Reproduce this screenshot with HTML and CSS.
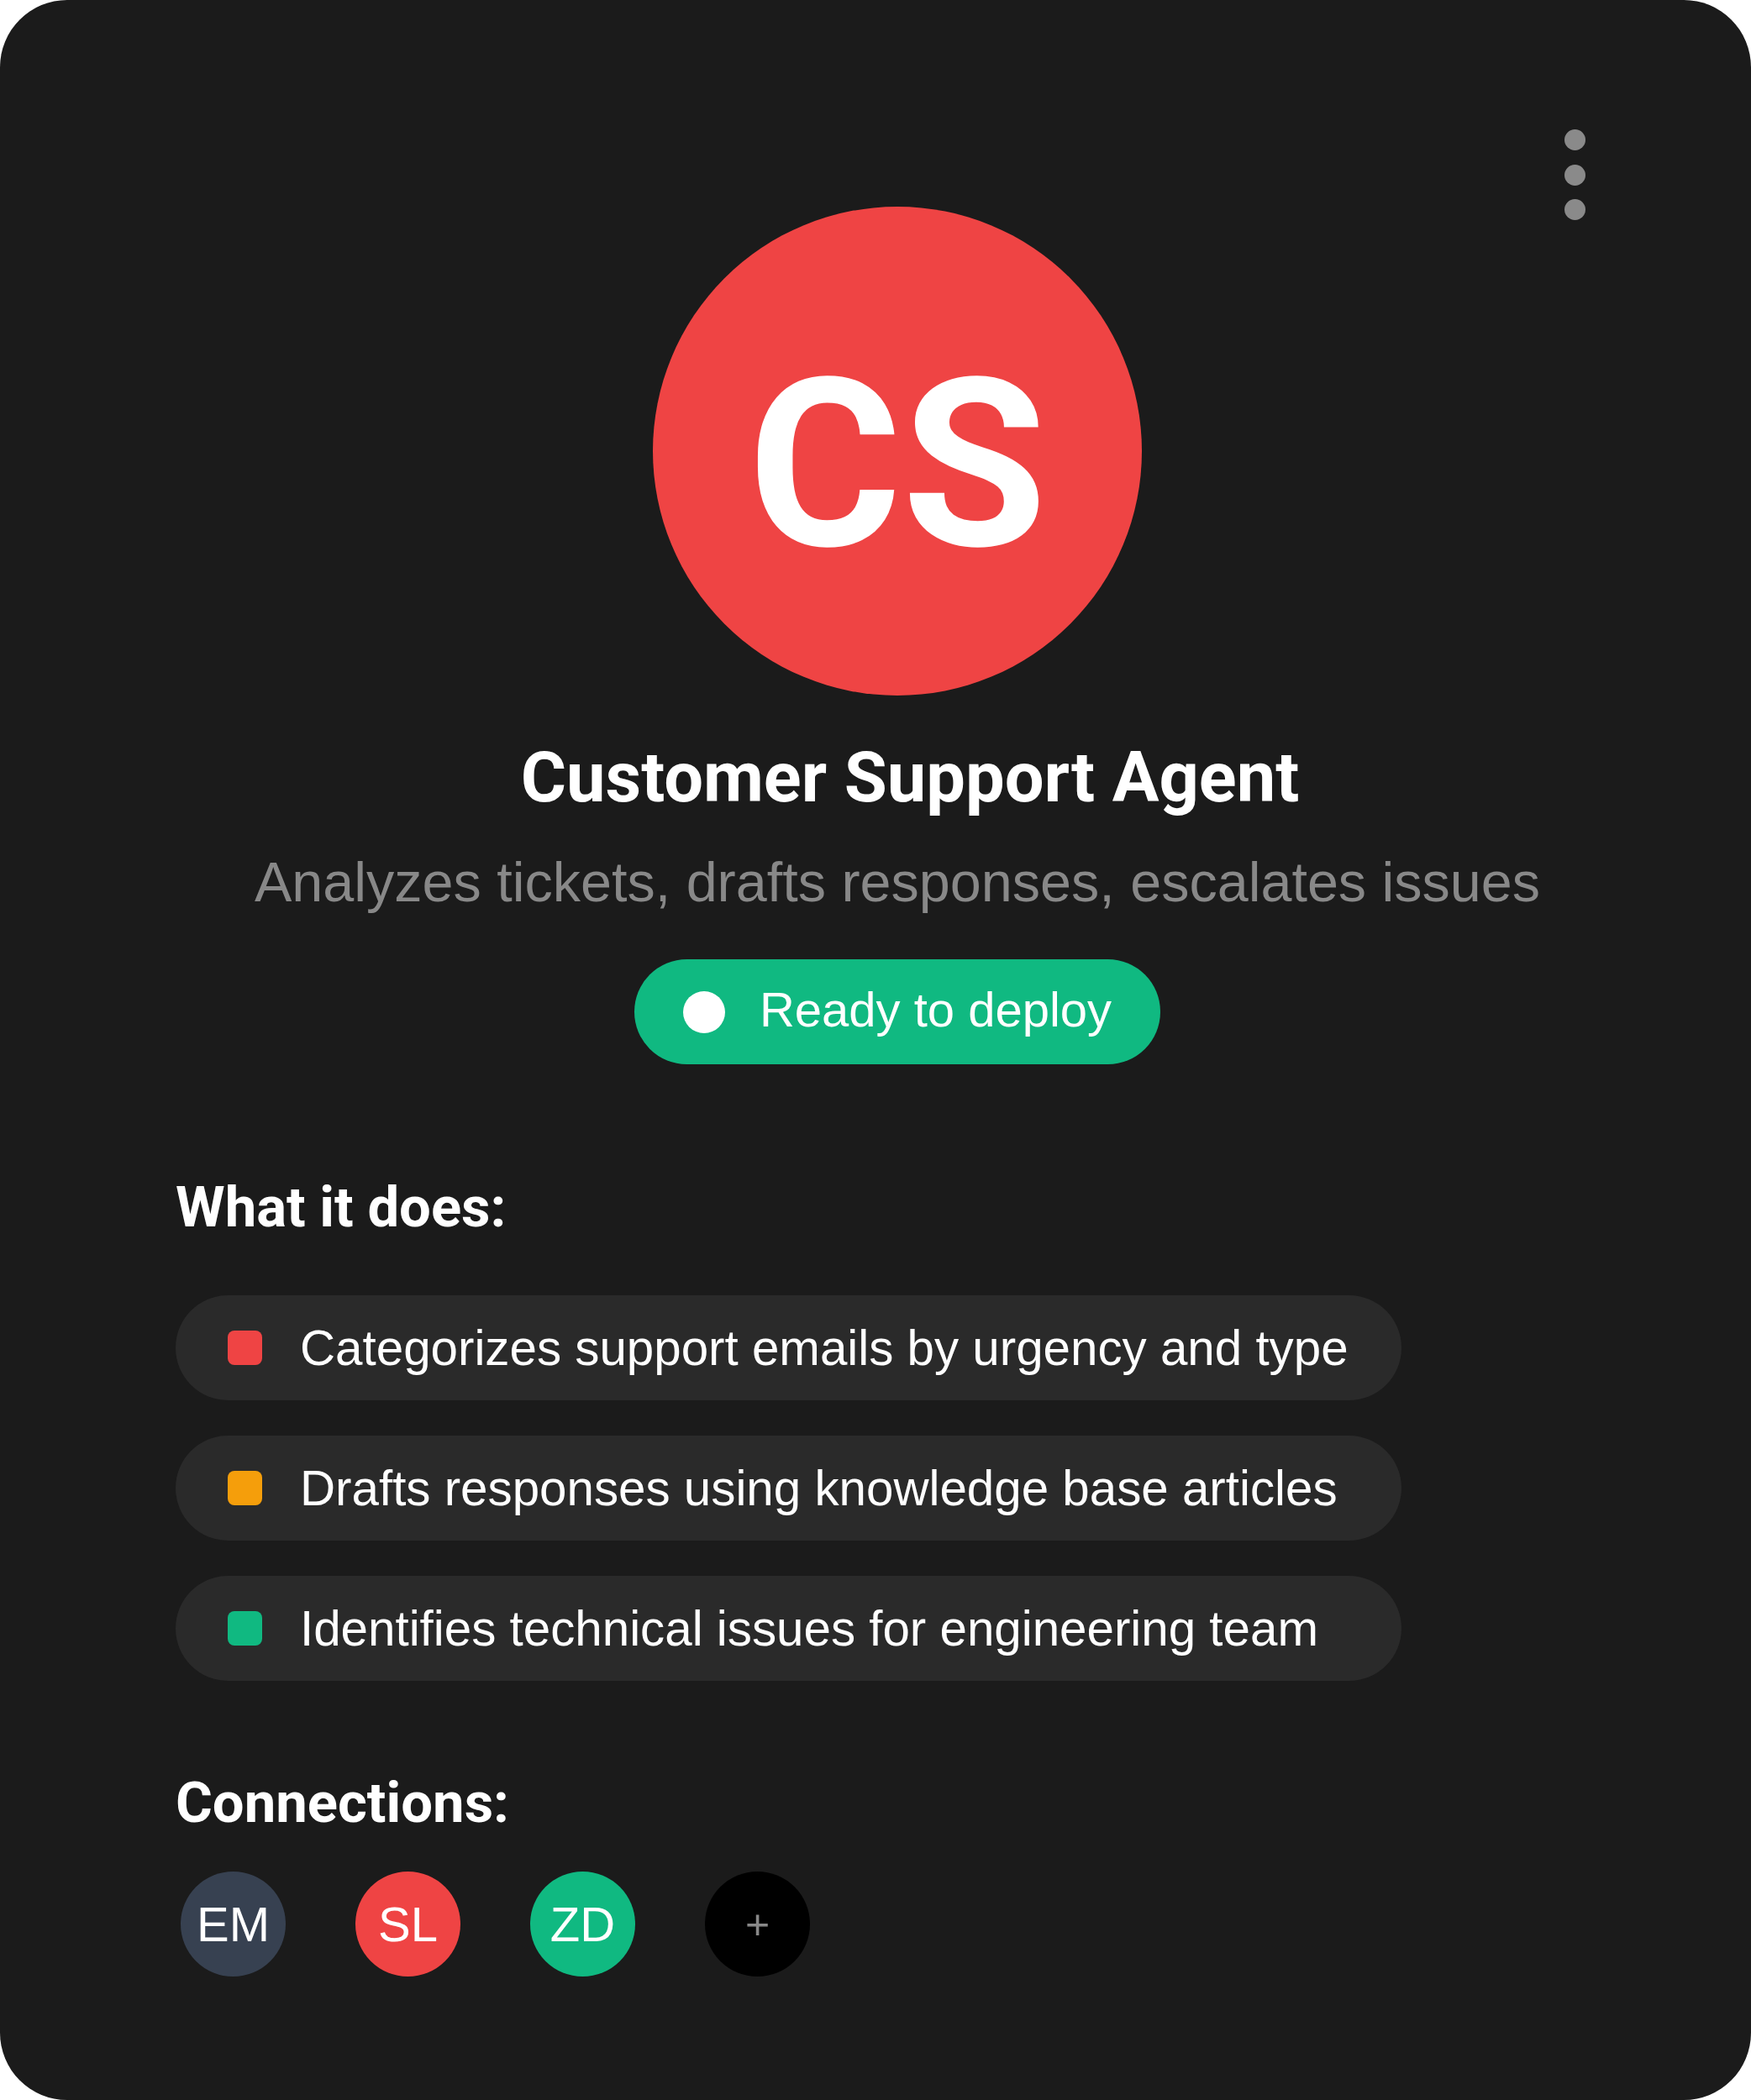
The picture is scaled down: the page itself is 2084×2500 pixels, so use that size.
FILE: index.html
```html
<!DOCTYPE html>
<html lang="en">
<head>
<meta charset="utf-8">
<title>Customer Support Agent</title>
<link rel="stylesheet" href="styles.css">
</head>
<body>
<div class="card">
  <button class="kebab" aria-label="More options">
    <span class="kebab-dot"></span>
    <span class="kebab-dot"></span>
    <span class="kebab-dot"></span>
  </button>
  <div class="content">
    <header class="hero">
      <div class="avatar">CS</div>
      <h1 class="title">Customer Support Agent</h1>
      <p class="subtitle">Analyzes tickets, drafts responses, escalates issues</p>
      <div class="status">
        <span class="status-dot"></span>
        <span class="status-text">Ready to deploy</span>
      </div>
    </header>

    <section class="section">
      <h2 class="section-title">What it does:</h2>
      <ul class="features">
        <li class="feature"><span class="marker marker-red"></span><span class="feature-text">Categorizes support emails by urgency and type</span></li>
        <li class="feature"><span class="marker marker-amber"></span><span class="feature-text">Drafts responses using knowledge base articles</span></li>
        <li class="feature"><span class="marker marker-green"></span><span class="feature-text">Identifies technical issues for engineering team</span></li>
      </ul>
    </section>

    <section class="section connections-section">
      <h2 class="section-title">Connections:</h2>
      <div class="connections">
        <span class="conn conn-em">EM</span>
        <span class="conn conn-sl">SL</span>
        <span class="conn conn-zd">ZD</span>
        <span class="conn conn-add">+</span>
      </div>
    </section>
  </div>
</div>
</body>
</html>
```

FILE: styles.css
```css
* {
  box-sizing: border-box;
}

html, body {
  margin: 0;
  padding: 0;
  background: #ffffff;
}

body {
  font-family: "Liberation Sans", Arial, sans-serif;
}

.card {
  position: relative;
  width: 2084px;
  height: 2500px;
  background: #1b1b1b;
  border-radius: 80px;
  padding: 246px 157px 0 209px;
  color: #ffffff;
}

.kebab {
  position: absolute;
  top: 154px;
  right: 197px;
  display: flex;
  flex-direction: column;
  gap: 16.7px;
  padding: 0;
  margin: 0;
  border: 0;
  background: transparent;
}

.kebab-dot {
  display: block;
  width: 25px;
  height: 25px;
  border-radius: 50%;
  background: #8a8a8a;
}

.content {
  display: flex;
  flex-direction: column;
}

.hero {
  display: flex;
  flex-direction: column;
  align-items: center;
}

.avatar {
  width: 582px;
  height: 582px;
  border-radius: 50%;
  background: #ef4444;
  display: flex;
  align-items: center;
  justify-content: center;
  padding-top: 32px;
  font-family: Roboto, "Liberation Sans", sans-serif;
  font-weight: 700;
  font-size: 280px;
  line-height: 1;
  color: #ffffff;
}

.title {
  margin: 48px 0 0 30px;
  font-family: Roboto, "Liberation Sans", sans-serif;
  font-weight: 700;
  font-size: 83px;
  line-height: 1.2;
  color: #ffffff;
}

.subtitle {
  margin: 35px 0 0;
  font-size: 66.5px;
  line-height: 1.2;
  color: #888888;
}

.status {
  margin-top: 52px;
  height: 125px;
  display: inline-flex;
  align-items: center;
  gap: 41px;
  padding: 0 58px;
  border-radius: 63px;
  background: #10b981;
}

.status-dot {
  width: 50px;
  height: 50px;
  border-radius: 50%;
  background: #ffffff;
  flex: none;
}

.status-text {
  font-size: 58px;
  line-height: 1.117;
  color: #ffffff;
  padding-bottom: 6px;
}

.section {
  margin-top: 130px;
}

.section-title {
  margin: 0;
  font-family: Roboto, "Liberation Sans", sans-serif;
  font-weight: 700;
  font-size: 67px;
  line-height: 1.2;
  color: #ffffff;
}

.features {
  list-style: none;
  margin: 64px 0 0;
  padding: 0;
  display: flex;
  flex-direction: column;
  gap: 42px;
  width: 1459px;
}

.feature {
  height: 125px;
  display: flex;
  align-items: center;
  gap: 45px;
  padding: 0 40px 0 62px;
  border-radius: 63px;
  background: #2a2a2a;
}

.marker {
  width: 41px;
  height: 41px;
  border-radius: 8px;
  flex: none;
}

.marker-red { background: #ef4444; }
.marker-amber { background: #f59e0b; }
.marker-green { background: #10b981; }

.feature-text {
  font-size: 58.3px;
  line-height: 1.117;
  color: #ffffff;
  white-space: nowrap;
}

.connections-section {
  margin-top: 105px;
}

.connections {
  margin-top: 42px;
  padding-left: 6px;
  display: flex;
  gap: 83px;
}

.conn {
  width: 125px;
  height: 125px;
  border-radius: 50%;
  display: flex;
  align-items: center;
  justify-content: center;
  font-size: 58px;
  line-height: 1;
  color: #ffffff;
  flex: none;
}

.conn-em { background: #374151; }
.conn-sl { background: #ef4444; }
.conn-zd { background: #10b981; }
.conn-add {
  background: #000000;
  color: #888888;
  font-size: 50px;
}
```
